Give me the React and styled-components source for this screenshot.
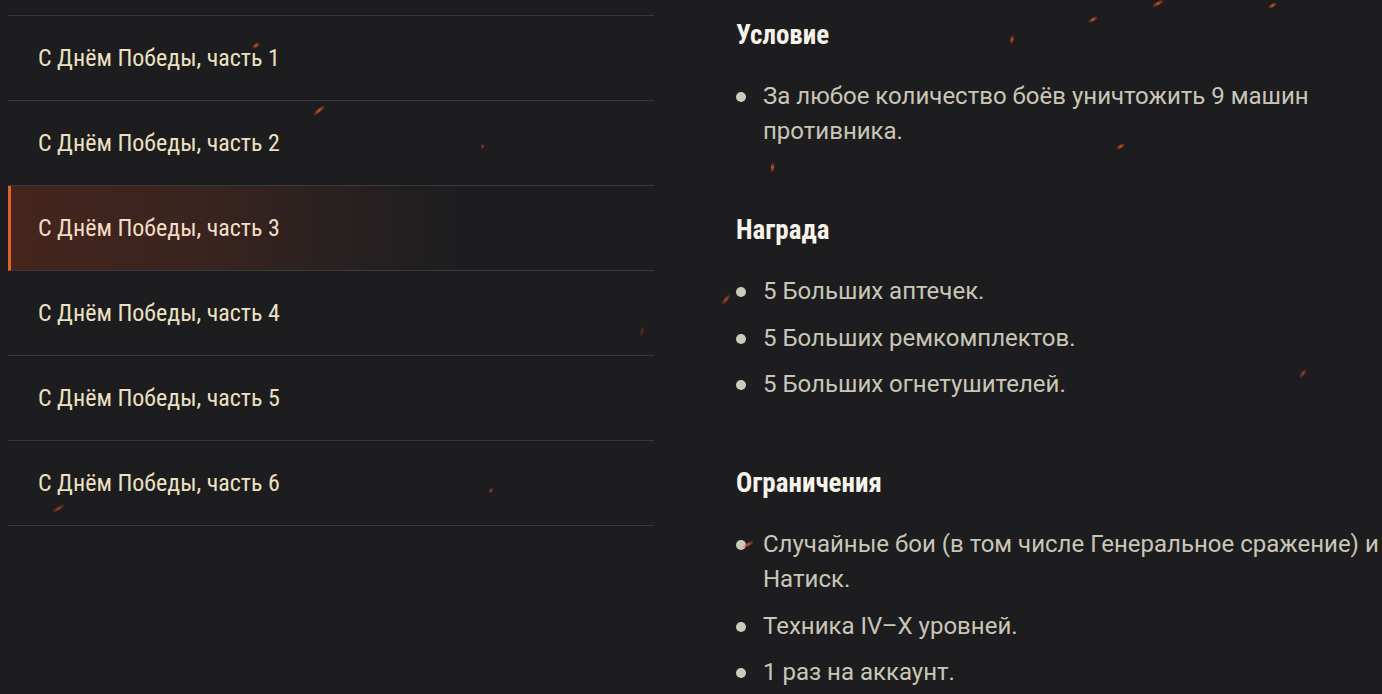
import styled, { createGlobalStyle } from "styled-components";

const GlobalStyle = createGlobalStyle`
  html, body {
    margin: 0;
    padding: 0;
    background: #1d1d1f;
    overflow: hidden;
  }
  body {
    font-family: Roboto, "Noto Sans", sans-serif;
  }
`;

const Page = styled.div`
  position: relative;
  width: 1382px;
  height: 694px;
  overflow: hidden;
  background: #1d1d1f;
  display: grid;
  grid-template-columns: 646px 680px;
  column-gap: 82px;
  padding: 15px 0 0 8px;
  box-sizing: border-box;
`;

const Menu = styled.ul`
  list-style: none;
  margin: 0;
  padding: 0;
  border-top: 1px solid #38383a;
  align-self: start;
`;

const MenuItem = styled.li`
  height: 84px;
  display: flex;
  align-items: center;
  padding-left: ${(p) => (p.$active ? "27px" : "30px")};
  border-bottom: 1px solid #38383a;
  border-left: ${(p) => (p.$active ? "3px solid #e0622c" : "none")};
  background: ${(p) =>
    p.$active
      ? "linear-gradient(90deg, #45251c 0%, #3b2420 28%, #2b2121 48%, #1d1d1f 70%)"
      : "transparent"};
  font-family: "Roboto Condensed", Roboto, sans-serif;
  font-stretch: condensed;
  font-size: 24px;
  color: ${(p) => (p.$active ? "#f3dcc6" : "#ece0c2")};
`;

const Content = styled.div`
  padding-top: 5px;
`;

const Section = styled.section`
  margin-bottom: ${(p) => p.$gap || "0px"};
`;

const Heading = styled.h3`
  margin: 0;
  font-family: "Roboto Condensed", Roboto, sans-serif;
  font-stretch: condensed;
  font-weight: 700;
  font-size: 27px;
  line-height: 30px;
  color: #f7f3ea;
`;

const List = styled.ul`
  list-style: none;
  margin: 0;
  padding: 29px 0 0 0;
`;

const Item = styled.li`
  position: relative;
  padding-left: 27px;
  font-size: 24px;
  line-height: 35px;
  color: #c9c6b8;
  margin-bottom: 11.5px;

  &::before {
    content: "";
    position: absolute;
    left: 0;
    top: 13px;
    width: 10px;
    height: 10px;
    border-radius: 50%;
    background: #cdcabd;
  }
`;

const Spark = styled.span`
  position: absolute;
  width: ${(p) => p.$len}px;
  height: 3px;
  border-radius: 2px;
  background: linear-gradient(90deg, rgba(200, 50, 20, 0.2), #d9542a, rgba(200, 50, 20, 0.2));
  opacity: ${(p) => p.$o || 0.85};
  pointer-events: none;
`;

const sparks = [
  { x: 252, y: 44, len: 8, r: -35 },
  { x: 312, y: 109, len: 14, r: -40 },
  { x: 480, y: 145, len: 5, r: -80, o: 0.5 },
  { x: 768, y: 166, len: 9, r: -85 },
  { x: 1008, y: 38, len: 8, r: -80 },
  { x: 1088, y: 18, len: 10, r: -30 },
  { x: 1152, y: 2, len: 12, r: -30 },
  { x: 1268, y: 4, len: 9, r: -30 },
  { x: 1116, y: 145, len: 9, r: -30 },
  { x: 1298, y: 372, len: 10, r: -50, o: 0.6 },
  { x: 720, y: 298, len: 12, r: -50, o: 0.7 },
  { x: 742, y: 543, len: 12, r: -30 },
  { x: 488, y: 489, len: 6, r: -60, o: 0.6 },
  { x: 52, y: 507, len: 13, r: -30, o: 0.6 },
  { x: 637, y: 330, len: 10, r: -80, o: 0.3 },
];

const items = [1, 2, 3, 4, 5, 6];

export default function App() {
  return (
    <>
      <GlobalStyle />
      <Page>
        <Menu>
          {items.map((n) => (
            <MenuItem key={n} $active={n === 3}>
              С Днём Победы, часть {n}
            </MenuItem>
          ))}
        </Menu>
        <Content>
          <Section $gap="66px">
            <Heading>Условие</Heading>
            <List>
              <Item>За любое количество боёв уничтожить 9 машин противника.</Item>
            </List>
          </Section>
          <Section $gap="66px">
            <Heading>Награда</Heading>
            <List>
              <Item>5 Больших аптечек.</Item>
              <Item>5 Больших ремкомплектов.</Item>
              <Item>5 Больших огнетушителей.</Item>
            </List>
          </Section>
          <Section>
            <Heading>Ограничения</Heading>
            <List>
              <Item>Случайные бои (в том числе Генеральное сражение) и Натиск.</Item>
              <Item>Техника IV–X уровней.</Item>
              <Item>1 раз на аккаунт.</Item>
            </List>
          </Section>
        </Content>
        {sparks.map((s, i) => (
          <Spark
            key={i}
            $len={s.len}
            $o={s.o}
            style={{ left: s.x, top: s.y, transform: `rotate(${s.r}deg)` }}
          />
        ))}
      </Page>
    </>
  );
}
